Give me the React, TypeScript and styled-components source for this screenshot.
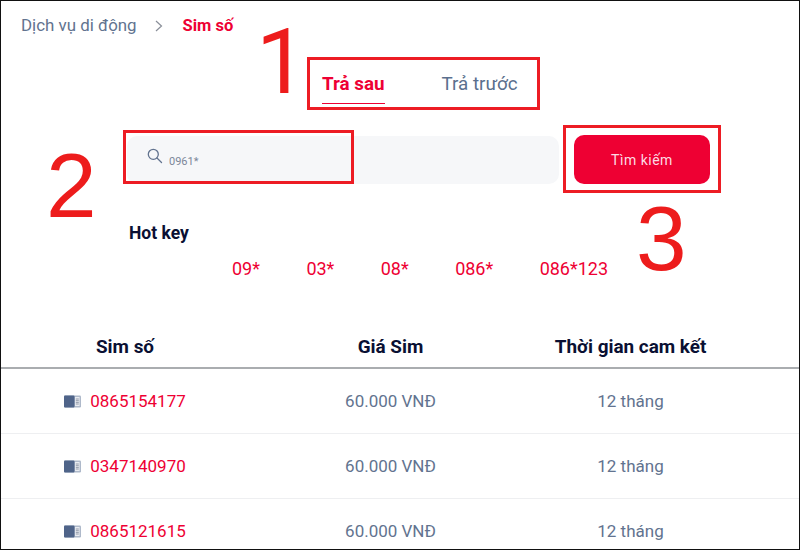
import React from 'react';
import styled, { createGlobalStyle } from 'styled-components';

const GlobalStyle = createGlobalStyle`
  html, body {
    margin: 0;
    padding: 0;
    background: #fff;
  }
  * {
    box-sizing: border-box;
  }
`;

const Page = styled.div`
  position: relative;
  width: 800px;
  height: 550px;
  overflow: hidden;
  border: 1px solid #111;
  background: #fff;
  font-family: Roboto, 'Liberation Sans', sans-serif;
`;

const Breadcrumb = styled.div`
  display: flex;
  align-items: center;
  height: 20px;
  margin: 14px 0 0 20px;
  font-size: 16.9px;
  color: #62738f;
`;

const CrumbIcon = styled.span`
  display: flex;
  margin: 2px 20px 0 18px;
  color: #8a8f99;
`;

const CurrentCrumb = styled.span`
  font-weight: 700;
  font-size: 16.5px;
  color: #ee0033;
`;

const Tabs = styled.div`
  display: flex;
  gap: 57px;
  margin: 36px 0 0 321px;
`;

const Tab = styled.div<{ $active?: boolean }>`
  height: 33px;
  padding-top: 2px;
  font-size: 18.8px;
  line-height: 22px;
  font-weight: ${(p) => (p.$active ? 700 : 400)};
  color: ${(p) => (p.$active ? '#ee0033' : '#5a6f8e')};
  border-bottom: ${(p) => (p.$active ? '1px solid #ee0033' : 'none')};
`;

const SearchRow = styled.div`
  display: flex;
  align-items: center;
  gap: 15px;
  margin: 31px 0 0 126px;
`;

const SearchBox = styled.div`
  display: flex;
  align-items: center;
  gap: 6px;
  width: 432px;
  height: 48px;
  padding: 0 0 0 20px;
  border-radius: 10px;
  background: #f6f7f9;
  color: #62738f;
`;

const SearchGlyph = styled.span`
  display: flex;
  margin-bottom: 8px;
`;

const SearchText = styled.span`
  margin-top: 4px;
  font-size: 11px;
  color: #7c8799;
`;

const SearchButton = styled.button`
  width: 136px;
  height: 49px;
  border: none;
  border-radius: 10px;
  background: #ee0033;
  color: #fcdbe3;
  font-family: inherit;
  font-size: 14px;
  letter-spacing: 0.5px;
`;

const HotKeyTitle = styled.div`
  margin: 40px 0 0 128px;
  font-size: 17.5px;
  line-height: 19px;
  font-weight: 700;
  color: #0a1033;
`;

const HotKeys = styled.div`
  display: flex;
  gap: 46.4px;
  margin: 15px 0 0 231px;
  font-size: 18px;
  line-height: 21px;
  color: #ee0033;
`;

const HotKey = styled.span``;

const Row = styled.div`
  display: grid;
  grid-template-columns: 248px 283px 197px;
  align-items: center;
  justify-items: center;
`;

const HeadRow = styled(Row)`
  height: 44px;
  margin-top: 46px;
  border-bottom: 2px solid #aaadb0;
  font-size: 18.9px;
  font-weight: 700;
  color: #0a1033;
`;

const BodyRow = styled(Row)`
  height: 65px;
  border-bottom: 1px solid #eeeff1;
  font-size: 17px;
  color: #62738f;
`;

const SimCell = styled.div`
  display: flex;
  align-items: center;
  gap: 9px;
`;

const SimNumber = styled.span`
  color: #ee0033;
`;

const Outline = styled.div<{ $x: number; $y: number; $w: number; $h: number }>`
  position: absolute;
  left: ${(p) => p.$x}px;
  top: ${(p) => p.$y}px;
  width: ${(p) => p.$w}px;
  height: ${(p) => p.$h}px;
  border: 3px solid #ed1c24;
`;

const Callout = styled.div<{ $x: number; $y: number; $plain?: boolean }>`
  position: absolute;
  left: ${(p) => p.$x}px;
  top: ${(p) => p.$y}px;
  font-family: ${(p) => (p.$plain ? 'Roboto' : "'Liberation Sans', Arial")}, sans-serif;
  font-size: 91px;
  line-height: 100px;
  color: #ed1c1c;
`;

const SearchIcon = () => (
  <svg width="16" height="16" viewBox="0 0 16 16" fill="none" stroke="currentColor" strokeWidth="1.3">
    <circle cx="6.3" cy="6.3" r="5" />
    <path d="M10 10 L14.5 14.5" strokeLinecap="round" />
  </svg>
);

const ChevronIcon = () => (
  <svg width="8" height="12" viewBox="0 0 8 12" fill="none" stroke="currentColor" strokeWidth="1.2">
    <path d="M1 1 L6.5 6 L1 11" />
  </svg>
);

const SimIcon = () => (
  <svg width="17" height="13" viewBox="0 0 17 13">
    <rect x="0" y="0.5" width="17" height="12" rx="1.2" fill="#aeb9ca" />
    <rect x="0" y="0.5" width="10.5" height="12" rx="1" fill="#4f6489" />
    <rect x="11" y="2" width="4.6" height="9" fill="#e9ecf1" />
    <path d="M11.8 4 H14.8 M11.8 5.7 H14.8 M11.8 7.4 H14.8 M11.8 9 H14.8" stroke="#7f899b" strokeWidth="0.8" />
  </svg>
);

const sims = ['0865154177', '0347140970', '0865121615'];
const hotKeys = ['09*', '03*', '08*', '086*', '086*123'];

export default function App() {
  return (
    <Page>
      <GlobalStyle />
      <Breadcrumb>
        Dịch vụ di động
        <CrumbIcon>
          <ChevronIcon />
        </CrumbIcon>
        <CurrentCrumb>Sim số</CurrentCrumb>
      </Breadcrumb>

      <Tabs>
        <Tab $active>Trả sau</Tab>
        <Tab>Trả trước</Tab>
      </Tabs>

      <SearchRow>
        <SearchBox>
          <SearchGlyph>
            <SearchIcon />
          </SearchGlyph>
          <SearchText>0961*</SearchText>
        </SearchBox>
        <SearchButton>Tìm kiếm</SearchButton>
      </SearchRow>

      <HotKeyTitle>Hot key</HotKeyTitle>
      <HotKeys>
        {hotKeys.map((k) => (
          <HotKey key={k}>{k}</HotKey>
        ))}
      </HotKeys>

      <HeadRow>
        <span>Sim số</span>
        <span>Giá Sim</span>
        <span>Thời gian cam kết</span>
      </HeadRow>
      {sims.map((s) => (
        <BodyRow key={s}>
          <SimCell>
            <SimIcon />
            <SimNumber>{s}</SimNumber>
          </SimCell>
          <span>60.000 VNĐ</span>
          <span>12 tháng</span>
        </BodyRow>
      ))}

      <Outline $x={306} $y={56} $w={233} $h={53} />
      <Outline $x={122} $y={129} $w={231} $h={54} />
      <Outline $x={562} $y={124} $w={158} $h={68} />
      <Callout $x={255} $y={11} $plain>1</Callout>
      <Callout $x={45} $y={135}>2</Callout>
      <Callout $x={635} $y={188}>3</Callout>
    </Page>
  );
}
